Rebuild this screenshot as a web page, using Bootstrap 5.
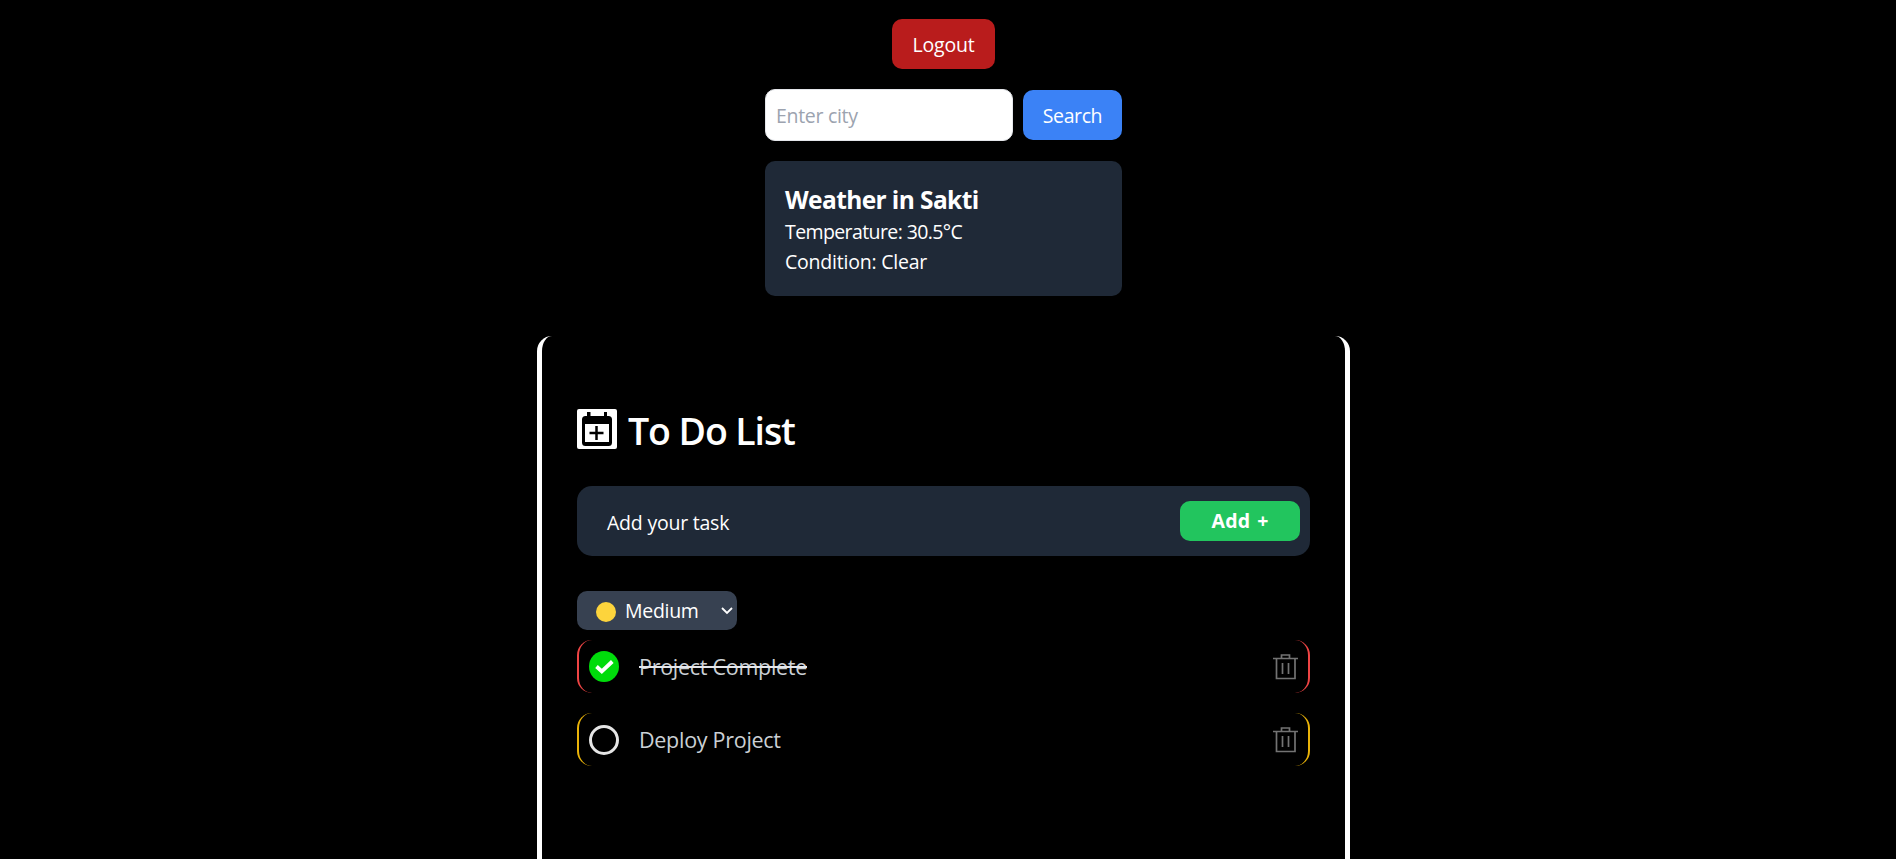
<!DOCTYPE html>
<html lang="en">
<head>
<meta charset="utf-8">
<meta name="viewport" content="width=device-width, initial-scale=1">
<title>To Do List</title>
<link href="https://cdn.jsdelivr.net/npm/bootstrap@5.3.0/dist/css/bootstrap.min.css" rel="stylesheet">
<style>
body{background:#000;color:#fff;font-family:"Open Sans","Noto Sans",sans-serif;font-size:19.5px;letter-spacing:-.22px;line-height:30px}
.page{width:1887px}
.btn{--bs-btn-font-size:19.5px;--bs-btn-line-height:30px;--bs-btn-color:#fff;--bs-btn-border-width:0;--bs-btn-border-radius:10px;--bs-btn-padding-x:0;--bs-btn-padding-y:0;letter-spacing:-.15px}
.btn-logout{background:#b91c1c;width:103px;height:50px;margin-top:19px;padding-top:1px}
.weather{width:357px;margin-top:20px}
.city{width:248px;height:52px;border:1px solid #e5e7eb;border-radius:10px;padding:1px 10px 0;font-size:19.5px;letter-spacing:-.3px}
.city::placeholder{color:#9ca3af}
.btn-search{background:#3b82f6;width:99px;height:50px;padding-top:1px;letter-spacing:-.4px}
.report{background:#1f2937;border-radius:10px;padding:20px;height:135px;margin-top:20px}
.report h2{font-size:24.5px;line-height:34px;margin:0;padding-top:2px;font-weight:700;letter-spacing:-.6px}
.w-temp{letter-spacing:-.6px}
.panel{width:813px;margin-top:40px;padding:73px 35px 0;border:solid #fff;border-width:0 5px;border-radius:15px 15px 0 0}
.panel h1{font-size:37.5px;line-height:37px;padding-top:2px;font-weight:600;margin:0 0 0 11px;letter-spacing:-1.1px}
.entry{height:70px;margin-top:37px;background:#1f2937;border-radius:15px;padding:0 10px 0 30px}
.entry-hint{padding-top:3px}
.btn-add{background:#22c55e;width:120px;height:40px;--bs-btn-font-weight:700;letter-spacing:.25px;word-spacing:1.5px}
.level{width:160px;height:39px;margin-top:35px;background:#374151;border-radius:10px;padding:0 4px 0 19px}
.level-name{padding-top:1px;letter-spacing:-.3px}
.dot{width:20px;height:20px;border-radius:50%;background:#fdd43c;margin:2px 9px 0 0}
.task{height:53px;border:solid #ef4444;border-width:0 2px;border-radius:15px;margin-top:20px;padding:0 10px;color:#cbd0d5;font-size:21.5px;letter-spacing:-.28px}
.level + .task{margin-top:10px}
.task.medium{border-color:#eab308}
.task-name{margin-left:20px}
.done{text-decoration:line-through;text-decoration-color:#e5e7eb;text-decoration-thickness:2px}
</style>
</head>
<body>
<main class="page vh-100 overflow-hidden d-flex flex-column align-items-center">
  <button class="btn btn-logout flex-shrink-0" type="button">Logout</button>
  <section class="weather">
    <form class="d-flex align-items-center justify-content-between">
      <input class="city" type="text" placeholder="Enter city" aria-label="City">
      <button class="btn btn-search" type="button">Search</button>
    </form>
    <div class="report">
      <h2>Weather in Sakti</h2>
      <div class="w-temp">Temperature: 30.5°C</div>
      <div>Condition: Clear</div>
    </div>
  </section>
  <section class="panel flex-grow-1">
    <div class="d-flex align-items-center">
      <svg width="40" height="40" viewBox="0 0 40 40" class="flex-shrink-0"><rect width="40" height="40" rx="2" fill="#fff"/><path d="M10 3h3.500v4h13.500v-4h3v4h1.500a3.500 3.500 0 0 1 3.500 3.500v23a3.500 3.500 0 0 1-3.500 3.500h-23a3.500 3.500 0 0 1-3.500-3.500v-23A3.500 3.500 0 0 1 8.500 7H10z"/><path d="M8 15h24v18H8z" fill="#fff"/><path d="M19.500 17v14M12.500 24h14" stroke="#000" stroke-width="2.500"/></svg>
      <h1>To Do List</h1>
    </div>
    <div class="entry d-flex align-items-center justify-content-between">
      <span class="entry-hint">Add your task</span>
      <button class="btn btn-add" type="button">Add +</button>
    </div>
    <div class="level d-flex align-items-center">
      <span class="dot"></span><span class="level-name">Medium</span>
      <svg class="ms-auto" width="12" height="8" viewBox="0 0 12 8"><path d="M1 1l5 5 5-5" fill="none" stroke="#fff" stroke-width="1.800"/></svg>
    </div>
    <div class="task d-flex align-items-center">
      <svg width="30" height="31" viewBox="0 0 30 31"><ellipse cx="15" cy="15.500" rx="15" ry="15.500" fill="#00dc0b"/><path d="M7.500 15.500l5.300 5 10.500-10" fill="none" stroke="#fff" stroke-width="3.800"/></svg>
      <span class="task-name done">Project Complete</span>
      <svg class="ms-auto" width="25" height="26" viewBox="0 0 25 26"><path d="M0 4.500h25M8.500 4V1h8v3M3.500 5v19.500h18.500V5M9.500 9v11M15.500 9v11" fill="none" stroke="#737373" stroke-width="1.700"/></svg>
    </div>
    <div class="task medium d-flex align-items-center">
      <svg width="30" height="30" viewBox="0 0 30 30"><circle cx="15" cy="15" r="13.500" fill="none" stroke="#e5e5e5" stroke-width="3"/></svg>
      <span class="task-name">Deploy Project</span>
      <svg class="ms-auto" width="25" height="26" viewBox="0 0 25 26"><path d="M0 4.500h25M8.500 4V1h8v3M3.500 5v19.500h18.500V5M9.500 9v11M15.500 9v11" fill="none" stroke="#737373" stroke-width="1.700"/></svg>
    </div>
  </section>
</main>
<script src="https://cdn.jsdelivr.net/npm/bootstrap@5.3.0/dist/js/bootstrap.bundle.min.js"></script>
</body>
</html>
